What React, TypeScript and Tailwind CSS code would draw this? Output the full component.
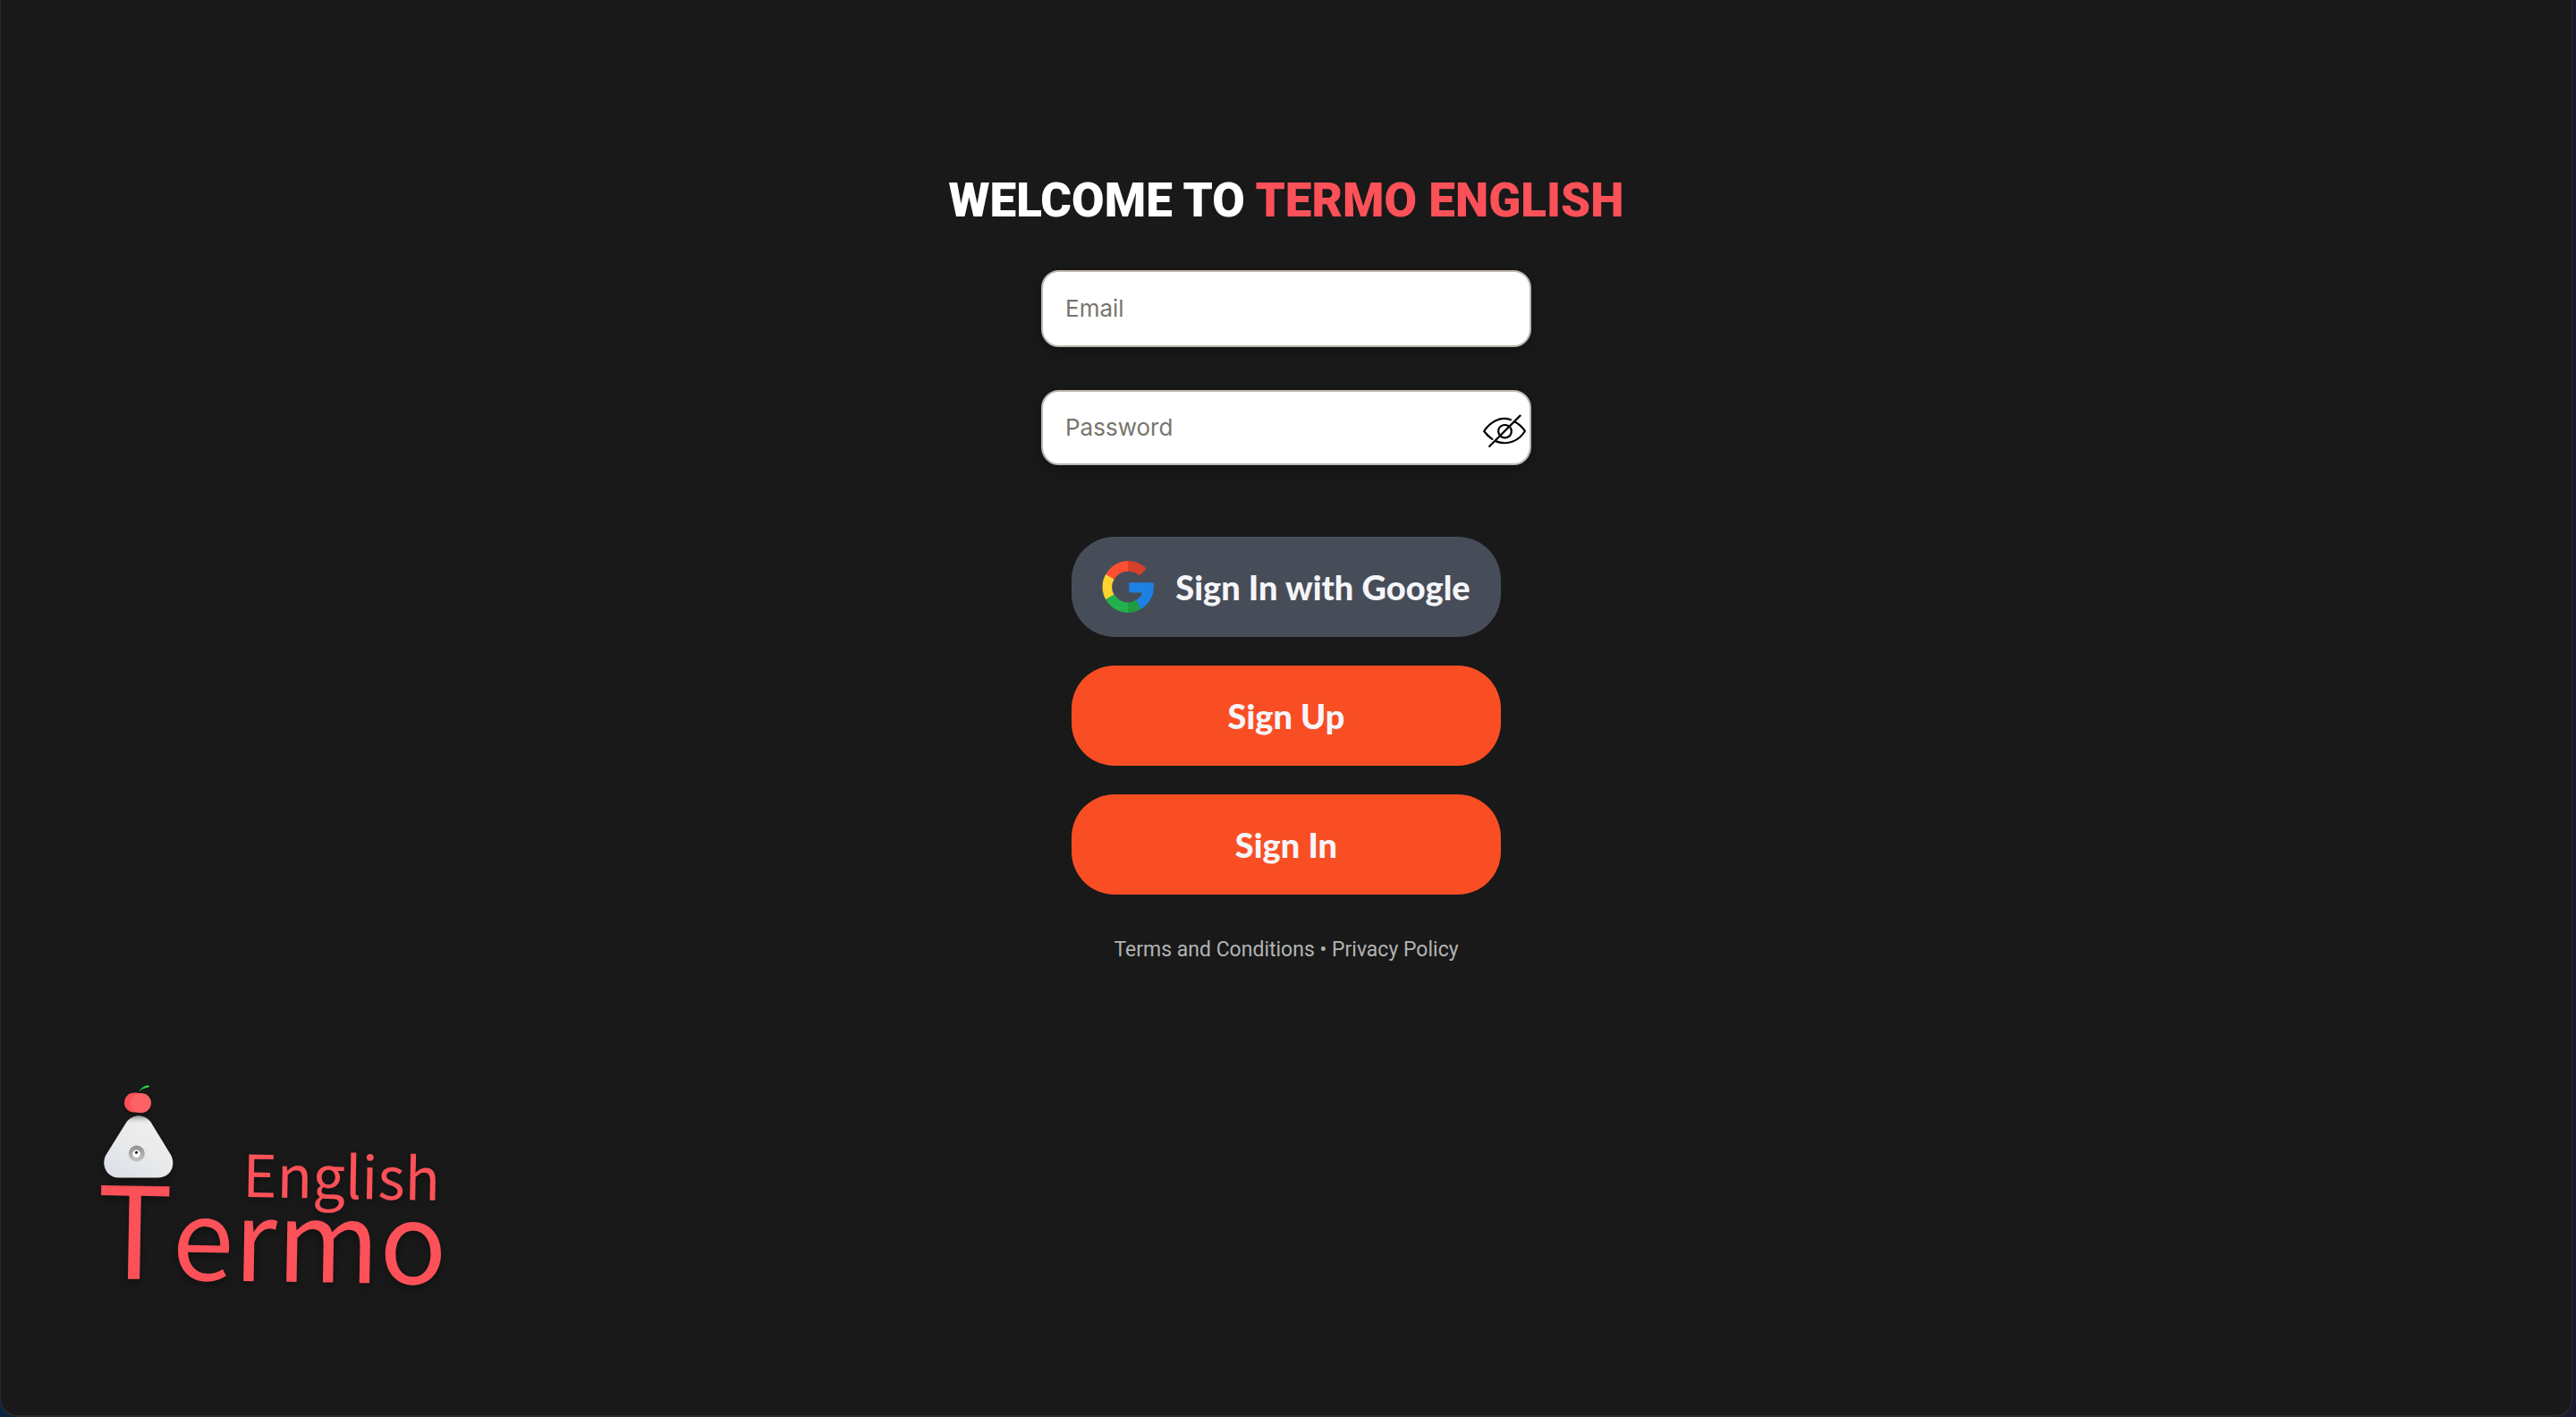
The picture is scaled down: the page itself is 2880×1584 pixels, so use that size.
import { useState } from "react";

function GoogleMark() {
  return (
    <svg viewBox="0 0 58 58" className="size-[58px] shrink-0" aria-hidden="true">
      <path d="M4.2 15.4A29 29 0 0 1 29 0L31 6L29 11.8A17.4 17.4 0 0 0 13.8 20.6Z" fill="#ff4f32" />
      <path d="M29 0A29 29 0 0 1 48.6 7.6Q49.6 8.6 48.7 9.6L42.7 15.6Q41.8 16.5 40.8 15.7A17.4 17.4 0 0 0 29 11.8Z" fill="#d6402b" />
      <path d="M4.2 43.2A29 29 0 0 1 4.2 15L13.6 20.6A17.4 17.4 0 0 0 13.6 38Z" fill="#ffd42f" />
      <path d="M29 58A29 29 0 0 1 4.2 43L13.8 37.6A17.4 17.4 0 0 0 29 46.4Z" fill="#24b14d" />
      <path d="M29 46.4A17.4 17.4 0 0 0 38.4 43.6L43.7 53.8A29 29 0 0 1 29 58Z" fill="#1e9b43" />
      <path d="M43.7 53.8L38.2 43.8A17.4 17.4 0 0 0 45.2 35.4H31.6Q30.2 35.4 30.2 34V25.6Q30.2 24.2 31.6 24.2H56.2Q57.6 24.2 57.8 25.6A29 29 0 0 1 43.7 53.8Z" fill="#1f80e4" />
    </svg>
  );
}

function EyeOff() {
  return (
    <svg viewBox="0 0 48 40" className="h-10 w-12" fill="none" stroke="#000" strokeWidth="2.2" strokeLinecap="round" strokeLinejoin="round" aria-hidden="true">
      <path d="M31 7.2C19 3.2 8 9.5 1.2 20C3.8 23.600 7 26.600 10.400 28.800" />
      <path d="M14.600 31.400C28 36.400 40.500 30.500 47 19.800C43.800 15.500 40 11.800 35.800 9.800" />
      <path d="M28.500 14.200C23.200 11.200 17.200 14.400 17.200 20C17.200 21.300 17.500 22.400 18.200 23.600" />
      <path d="M20.200 26C25.500 29.500 31.800 26 31.800 20C31.800 18.500 31.500 17.400 30.800 16.200" />
      <path d="M41.600 2.600L7.200 37" />
    </svg>
  );
}

function Logo() {
  return (
    <svg viewBox="0 0 420 270" className="h-[270px] w-[420px] overflow-visible" role="img" aria-label="Termo English">
      <defs>
        <linearGradient id="body" x1="0" y1="1" x2="0.7" y2="0">
          <stop offset="0" stopColor="#d9dfe7" />
          <stop offset="0.5" stopColor="#e8e9eb" />
          <stop offset="1" stopColor="#efefef" />
        </linearGradient>
        <linearGradient id="cap" x1="0" y1="0" x2="0" y2="1">
          <stop offset="0" stopColor="#7c7c7c" stopOpacity="0.75" />
          <stop offset="1" stopColor="#e8e8e8" stopOpacity="0" />
        </linearGradient>
        <linearGradient id="stem" x1="0" y1="1" x2="1" y2="0">
          <stop offset="0" stopColor="#145c20" />
          <stop offset="0.5" stopColor="#22b83a" />
          <stop offset="1" stopColor="#2fea4e" />
        </linearGradient>
        <linearGradient id="ring" x1="0" y1="0" x2="0" y2="1">
          <stop offset="0" stopColor="#8e8e8e" />
          <stop offset="1" stopColor="#c6c6c6" />
        </linearGradient>
      </defs>
      <g className="drop-shadow-[0_4px_4px_rgba(0,0,0,0.35)]">
        <text x="17" y="239" transform="rotate(1 17 239)" className="fill-[#fc5158] font-['Noto_Sans_CJK_SC']">
          <tspan fontSize="142">T</tspan><tspan fontSize="124">ermo</tspan>
        </text>
      </g>
      <g className="drop-shadow-[0_4px_4px_rgba(0,0,0,0.35)]">
        <text x="181" y="148" transform="rotate(1 181 148)" fontSize="65" className="fill-[#fc5158] font-['Noto_Sans_CJK_SC']">English</text>
      </g>
      <g className="drop-shadow-[0_4px_4px_rgba(0,0,0,0.35)]">
        <path d="M51 65C57.500 55 72.500 55 79 65L101 101C107 112 101 126.500 87 126.500H43C29 126.500 22.500 112 28.500 101Z" fill="url(#body)" />
        <path d="M51 65C57.500 55 72.500 55 79 65L80 67H50Z" fill="url(#cap)" />
        <circle cx="62.800" cy="99.600" r="9" fill="url(#ring)" />
        <circle cx="62.500" cy="99.800" r="4.300" fill="#fff" />
        <circle cx="62.500" cy="98.300" r="1.500" fill="#000" />
      </g>
      <g className="drop-shadow-[0_2px_2px_rgba(0,0,0,0.3)]">
        <rect x="49" y="31.500" width="24" height="22" rx="11" fill="#fd4f56" />
        <rect x="55.500" y="32" width="23.500" height="22" rx="11" fill="#fb6167" />
        <path d="M64 31.500C67 26.500 70.500 23.800 75 23.200C77 22.900 77.500 25 75.500 25.500C70.500 26.400 67.500 28.400 64 31.500Z" fill="url(#stem)" />
      </g>
    </svg>
  );
}

const field =
  "w-full rounded-[20px] border-2 border-[#bdb7af] bg-white px-[25px] pb-0.5 font-['Inter'] text-[26px] leading-9 text-black shadow-[0_4px_12px_rgba(0,0,0,0.3)] outline-none placeholder:text-[#78756d]";
const pill =
  "flex h-28 w-full items-center justify-center rounded-[48px] font-['Lato'] text-[38px] font-black text-[#f5f5f9]";

export default function App() {
  const [visible, setVisible] = useState(false);
  return (
    <div className="min-h-screen bg-linear-to-r from-[#0b2444] to-[#1b1a30] pr-1">
      <div className="flex min-h-screen flex-col justify-between rounded-b-[20px] border-x border-b-2 border-[#2b2b2b] bg-[#191919]">
        <main className="flex flex-col items-center pt-[190px]">
          <h1 className="font-['Roboto'] text-[53px] leading-[68px] font-black whitespace-nowrap text-white">
            WELCOME TO <span className="text-[#fc5158]">TERMO ENGLISH</span>
          </h1>
          <form className="mt-11 flex w-full max-w-[548px] flex-col items-center" onSubmit={(e) => e.preventDefault()}>
            <input type="email" aria-label="Email" placeholder="Email" className={field + " h-[86px]"} />
            <div className="relative mt-12 w-full">
              <input type={visible ? "text" : "password"} aria-label="Password" placeholder="Password" className={field + " h-[84px]"} />
              <button type="button" aria-label="Show password" onClick={() => setVisible(!visible)} className="absolute top-[26px] right-[6px]">
                <EyeOff />
              </button>
            </div>
            <div className="mt-20 flex w-full max-w-[480px] flex-col gap-8">
              <button type="button" className={pill + " gap-6 bg-[#474d58]"}>
                <GoogleMark />
                <span>Sign In with Google</span>
              </button>
              <button type="button" className={pill + " bg-[#f94e24]"}>Sign Up</button>
              <button type="submit" className={pill + " bg-[#f94e24]"}>Sign In</button>
            </div>
          </form>
          <p className="mt-[46px] font-['Roboto'] text-[23px] leading-8 text-[#b3b3b3]">
            <a href="#terms">Terms and Conditions</a> • <a href="#privacy">Privacy Policy</a>
          </p>
        </main>
        <footer className="pb-[122px] pl-[89px]">
          <Logo />
        </footer>
      </div>
    </div>
  );
}
